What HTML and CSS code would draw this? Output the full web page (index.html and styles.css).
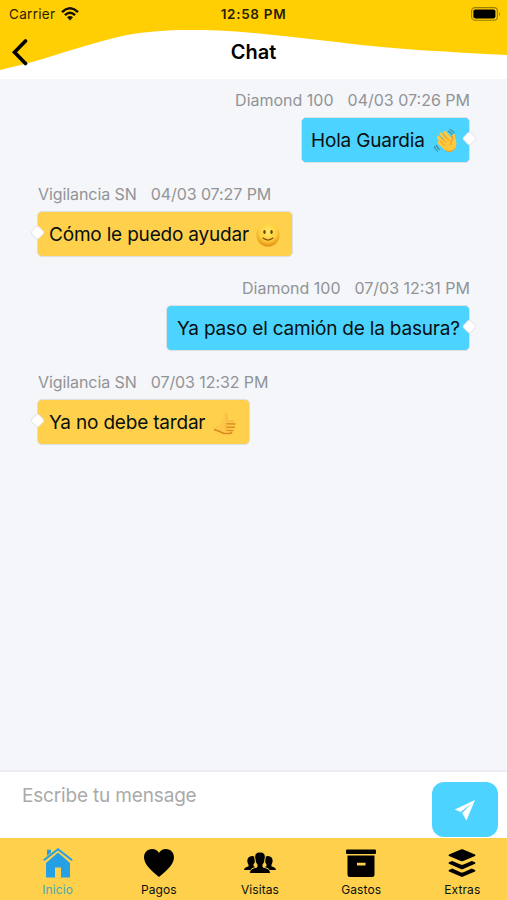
FILE: index.html
```html
<!DOCTYPE html>
<html lang="es">
<head>
<meta charset="utf-8">
<meta name="viewport" content="width=device-width, initial-scale=1">
<title>Chat</title>
<link rel="stylesheet" href="styles.css">
</head>
<body>
<div class="app">
  <header class="header">
    <svg class="wave" viewBox="0 0 507 79" aria-hidden="true"><path fill="#ffce03" d="M0 0H507V55C465 53 430 51 396 48.300C345 44 300 37 254 33C228 30.500 210 30 187 30C168 30 146 31.500 127 35C95 42 60 54 27.700 63.300L0 70Z"/></svg>
    <div class="status">
      <div class="carrier"><span>Carrier</span>
        <svg width="18" height="14" viewBox="0 0 18 14"><g fill="none" stroke="#181300" stroke-width="2.500"><path d="M1 5.100Q9-2.500 17 5.100"/><path d="M3.900 8.100Q9 3.300 14.100 8.100"/></g><path d="M6 10.300Q9 7.800 12 10.300L9 13.400Z" fill="#181300"/></svg>
      </div>
      <div class="clock">12:58 PM</div>
      <svg class="battery" width="30" height="14" viewBox="0 0 30 14"><rect x=".6" y=".6" width="25.800" height="12.600" rx="3.500" fill="none" stroke="#9b7d08" stroke-width="1.100"/><rect x="2.400" y="2.400" width="22" height="9" rx="1.800"/><path d="M28 4.700Q30 7 28 9.300Z" fill="#9b7d08"/></svg>
    </div>
    <div class="titlebar">
      <svg class="back" width="16" height="27" viewBox="0 0 16 27"><path d="M13.500 2L2.500 13.300L13.500 24.500" fill="none" stroke="#000" stroke-width="3.600" stroke-linecap="round" stroke-linejoin="miter"/></svg>
      <h1>Chat</h1>
    </div>
  </header>

  <main class="messages">
    <article class="message sent">
      <div class="meta"><span>Diamond 100</span><time>04/03 07:26 PM</time></div>
      <div class="bubble b1"><span>Hola Guardia</span>
        <svg width="26" height="26" viewBox="0 0 26 26"><g fill="none" stroke="#ffc83d" stroke-width="3.200" stroke-linecap="round"><path d="M5.500 9.500L13 17M8 6L16 14.500M12 4.500L18 12M20.500 7.500L21.500 15M6 14.500L12 20"/></g><path d="M9 12L18 9.500L22.800 12Q24.500 18 21 22Q16.500 26 12 22L6.500 16.500Z" fill="#ffc83d"/><path d="M7.500 9L13 14.500M10 6.500L16 12.500M7.500 13.500L11.500 17.500M19.200 8L19.500 12Q17 13.500 18 16.500M12.500 22.500Q17 25 21 21.500" fill="none" stroke="#dc9123" stroke-width=".9" stroke-linecap="round"/><path d="M15.500 3.500Q18 4 19 6.500M17 1.500Q20 2.500 21 5M3.500 17.500Q4 20 6.500 21.500M1.500 18.500Q1.800 21.500 4.500 23" fill="none" stroke="#3e91a5" stroke-width="1.300" stroke-linecap="round"/></svg>
      </div>
    </article>
    <article class="message received">
      <div class="meta"><span>Vigilancia SN</span><time>04/03 07:27 PM</time></div>
      <div class="bubble b2"><span>Cómo le puedo ayudar</span>
        <svg width="24" height="24" viewBox="0 0 24 24"><defs><radialGradient id="face" cx=".5" cy=".35" r=".65"><stop stop-color="#ffec68"/><stop offset=".6" stop-color="#ffce3c"/><stop offset="1" stop-color="#e08c12"/></radialGradient></defs><circle cx="12" cy="12" r="11.500" fill="url(#face)"/><ellipse cx="8.500" cy="9" rx="1.250" ry="2" fill="#70420d"/><ellipse cx="15.500" cy="9" rx="1.250" ry="2" fill="#70420d"/><path d="M7 15.100Q12 19 17 15.100" fill="none" stroke="#83500f" stroke-width="1.300" stroke-linecap="round"/></svg>
      </div>
    </article>
    <article class="message sent">
      <div class="meta"><span>Diamond 100</span><time>07/03 12:31 PM</time></div>
      <div class="bubble b3"><span>Ya paso el camión de la basura?</span></div>
    </article>
    <article class="message received">
      <div class="meta"><span>Vigilancia SN</span><time>07/03 12:32 PM</time></div>
      <div class="bubble b4"><span>Ya no debe tardar</span>
        <svg width="26" height="26" viewBox="0 0 26 26"><path d="M2 18Q6 17 8.500 13.500Q12 9 12 3Q12.500 1 14.500 3Q15.500 7 14.500 11H22Q24 12 23 14Q24.500 16 22.500 17.500Q23 19 21 20.500Q21.500 23 18.500 23.500H12Q7 22 2 19Z" fill="#ffc848"/><path d="M2 19.500Q7 21 12 23.500H18.500L20 22" fill="none" stroke="#d98a20" stroke-width="1.700"/><path d="M15 13.800L23 14M15 17.200L22.500 17.300M15 20.400L21 20.600" fill="none" stroke="#dc9123" stroke-width="1.400" stroke-linecap="round"/><path d="M14.500 3.500Q15.500 7 14.500 11H22M13 13L14 20" fill="none" stroke="#efb044" stroke-width=".9"/></svg>
      </div>
    </article>
  </main>

  <section class="composer">
    <div class="field">Escribe tu mensage</div>
    <div class="send" role="button" aria-label="Enviar"><svg width="22" height="22" viewBox="0 0 22 22"><path fill="#fff" d="M21 1L.8 10.600L6.500 13L17.500 4.500L8.200 14L12.400 21.500Z"/></svg></div>
  </section>

  <nav class="tabs">
    <div class="tab active"><svg width="30" height="30" viewBox="0 0 30 30"><path fill="#26a0e4" d="M4 1.800H8V5.500L4 10ZM15 4.500L27 15V29.500H18V19.500H12V29.500H3V15Z"/><path d="M1 13L15 1.300L29 13" fill="none" stroke="#ffd04c" stroke-width="4"/><path d="M.800 12.300L15 1.300L29.200 12.300" fill="none" stroke="#26a0e4" stroke-width="2"/></svg><span>Inicio</span></div>
    <div class="tab"><svg width="32" height="30" viewBox="0 0 32 30"><path d="M16 29C11 25 1 17 1 9.500C1 4.500 4.500 1 9 1C12.500 1 15 3 16 5C17 3 19.500 1 23 1C27.500 1 31 4.500 31 9.500C31 17 21 25 16 29Z"/></svg><span>Pagos</span></div>
    <div class="tab"><svg width="34" height="30" viewBox="0 0 34 30"><path d="M7 8.500C10 7 12.500 8.500 12 12C12 14 11.500 15 10.500 16.500V18L12 19L8.500 22H1Q1 19.500 5.500 18.500V16.500C4 14.500 3.500 10 7 8.500Z"/><path d="M27 8.500C24 7 21.500 8.500 22 12C22 14 22.500 15 23.500 16.500V18L22 19L25.500 22H33Q33 19.500 28.500 18.500V16.500C30 14.500 30.500 10 27 8.500Z"/><path d="M17 4C21.500 4 23 7 22 11C22 14 21 15 20 16.500V19C23.500 20 27.500 20.800 27.500 25.500H6.500C6.500 20.800 10.500 20 14 19V16.500C13 15 12 14 12 11C11 7 12.500 4 17 4Z" stroke="#ffd04c" stroke-width="1"/></svg><span>Visitas</span></div>
    <div class="tab"><svg width="30" height="30" viewBox="0 0 30 30"><rect x="0" y="1.500" width="30" height="4.500" rx="1"/><path fill-rule="evenodd" d="M1.500 7.500H28.500V26.500Q28.500 29 26 29H4Q1.500 29 1.500 26.500ZM11 14.800V17.400H19.500V14.800Z"/></svg><span>Gastos</span></div>
    <div class="tab"><svg width="28" height="30" viewBox="0 0 28 30"><path d="M12.800 1.600Q14 1.100 15.200 1.600L27 6.500Q28 7.200 27 7.900L15.200 13Q14 13.500 12.800 13L1 7.900Q0 7.200 1 6.500Z"/><path id="layer" d="M1 14.300L4.200 12.900L12.500 16.500Q14 17.100 15.500 16.500L23.800 12.900L27 14.300Q28 15 27 15.700L15.200 20.900Q14 21.400 12.800 20.900L1 15.700Q0 15 1 14.300Z"/><use href="#layer" y="7.700"/></svg><span>Extras</span></div>
  </nav>
</div>
</body>
</html>
```

FILE: styles.css
```css
* { box-sizing: border-box; }
body { margin: 0; background: #f4f6fa; font-family: Inter, "Liberation Sans", sans-serif; color: #07100f; }
svg { display: block; flex: none; }
.app { width: 507px; height: 900px; display: flex; flex-direction: column; overflow: hidden; }
.header { position: relative; height: 79px; background: #fff; flex: none; }
.wave { position: absolute; inset: 0; width: 507px; height: 79px; }
.status { position: relative; height: 27px; display: grid; grid-template-columns: 1fr auto 1fr; align-items: center; padding: 1px 6px 0 9px; font-size: 13.500px; color: #292100; }
.carrier { display: flex; gap: 6px; align-items: center; letter-spacing: .3px; }
.clock { font-size: 13.500px; font-weight: 600; letter-spacing: .7px; margin-left: -3px; }
.battery { justify-self: end; }
.titlebar { position: relative; height: 50px; display: grid; grid-template-columns: 42px 1fr 42px; align-items: center; }
.back { margin-left: 12px; }
h1 { margin: 0; text-align: center; font-size: 20px; font-weight: 600; line-height: 30px; color: #000; }
.messages { flex: 1; padding: 10px 37px 0; }
.message { height: 94px; display: flex; flex-direction: column; align-items: flex-start; }
.sent { align-items: flex-end; }
.meta { display: flex; gap: 14px; height: 22px; line-height: 22px; font-size: 16px; color: #929396; white-space: nowrap; margin-bottom: 6px; }
.received .meta { padding-left: 1px; letter-spacing: -.08px; }
.bubble { position: relative; height: 46px; border-radius: 5px; border: 1px solid #dde0df; padding: 1px 10px 0; display: flex; align-items: center; justify-content: space-between; background: #ffd04c; font-size: 19px; letter-spacing: -.19px; white-space: nowrap; }
.sent .bubble { background: #4dd3ff; padding-left: 9px; }
.received .bubble { padding-left: 11px; }
.sent .b3 { width: 304px; padding-left: 10px; }
.b1 { width: 169px; }
.b2 { width: 256px; padding-right: 12px; }
.b4 { width: 213px; padding-right: 11px; }
.bubble::after { content: ""; position: absolute; width: 9px; height: 9px; top: 15px; transform: rotate(45deg); background: #fff; border: 1px solid #e9e5e8; border-radius: 3px; }
.sent .bubble::after { right: -6px; }
.received .bubble::after { left: -6px; }
.composer { height: 68px; background: #fff; border-top: 2px solid #ebedf0; flex: none; display: flex; justify-content: space-between; padding: 10px 9px 0 22px; }
.field { font-size: 19px; line-height: 27px; letter-spacing: -.17px; color: #aaa; }
.send { width: 66px; height: 55px; border-radius: 12px; background: #4dd3ff; display: flex; align-items: center; justify-content: center; }
.tabs { height: 62px; flex: none; background: #ffd04c; display: grid; grid-template-columns: repeat(5, 101.200px); padding-left: 7px; }
.tab { display: flex; flex-direction: column; align-items: center; padding-top: 10px; font-size: 12px; line-height: 16px; letter-spacing: .1px; }
.tab span { margin-top: 4px; }
.active { color: #49a9b4; }
```
